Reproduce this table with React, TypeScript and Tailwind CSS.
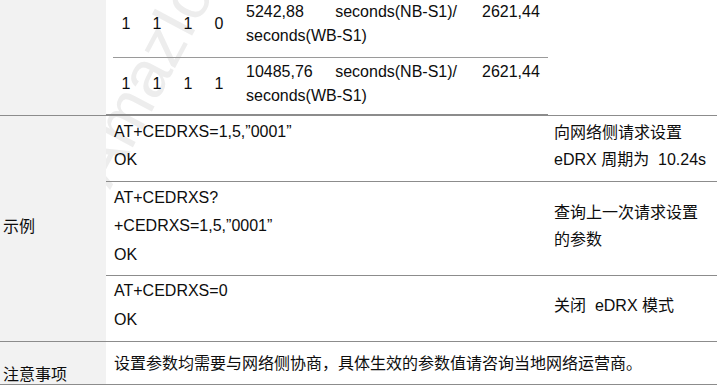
const lineColor = "border-[#8c8c8c]";

function NestedRow({ bits, value, rest, first }: { bits: string[]; value: string; rest: string; first?: boolean }) {
  return (
    <div className={first ? "flex items-start h-[58px] border-b border-[#9a9a9a]" : "flex items-start h-[56px] pt-[2px]"}>
      {bits.map((b, i) => (
        <div key={i} className="w-[31px] h-[48px] pl-[8.5px] flex items-center">
          {b}
        </div>
      ))}
      <div className="w-[236px] pl-[9px] pr-[16px] leading-[24px] text-justify">
        {value} seconds(NB-S1)/ {rest}
      </div>
      <div className="w-[75px] pl-[9px] leading-[24px]">2621,44</div>
    </div>
  );
}

function ExampleRow({ height, border, cmds, desc, top }: { height: string; border?: boolean; cmds: string[]; desc: string[]; top: string }) {
  return (
    <div className={`flex ${height} ${border ? `border-b ${lineColor}` : ""}`}>
      <div className={`w-[442px] pl-[8px] ${top} leading-[28.5px]`}>
        {cmds.map((c, i) => (
          <div key={i}>{c}</div>
        ))}
      </div>
      <div className="flex-1 pl-[6px] pb-[4px] flex flex-col justify-center leading-[26.5px] whitespace-pre">
        {desc.map((d, i) => (
          <div key={i}>{d}</div>
        ))}
      </div>
    </div>
  );
}

export default function App() {
  return (
    <div className="relative w-[718px] h-[391px] overflow-hidden bg-white text-[16px] text-[#0d0d0d] font-['Liberation_Sans','Noto_Sans_CJK_SC',sans-serif]">
      {/* watermark */}
      <div
        aria-hidden="true"
        className="absolute left-[110px] top-[134px] origin-[0_56px] -rotate-[62deg] text-[66px] leading-none text-[#ededed] whitespace-nowrap pointer-events-none select-none"
      >
        AmazIoT
      </div>

      <div className="relative w-[717px]">
        {/* tail of the eDRX value table */}
        <div className="flex h-[116px]">
          <div className={`w-[106px] bg-[#f2f2f2] border-b ${lineColor}`} />
          <div className={`w-[442px] pl-[7px] border-b-2 ${lineColor}`}>
            <NestedRow first bits={["1", "1", "1", "0"]} value="5242,88" rest="seconds(WB-S1)" />
            <NestedRow bits={["1", "1", "1", "1"]} value="10485,76" rest="seconds(WB-S1)" />
          </div>
          <div className={`flex-1 border-b ${lineColor}`} />
        </div>

        {/* 示例 */}
        <div className={`flex border-b ${lineColor}`}>
          <div className="w-[106px] bg-[#f2f2f2] pl-[3px] pb-[3px] flex items-center">示例</div>
          <div className="flex-1">
            <ExampleRow
              height="h-[66px]"
              border
              top="pt-[1.5px]"
              cmds={["AT+CEDRXS=1,5,\u201d0001\u201d", "OK"]}
              desc={["向网络侧请求设置", "eDRX 周期为  10.24s"]}
            />
            <ExampleRow
              height="h-[94px]"
              border
              top="pt-[1.5px]"
              cmds={["AT+CEDRXS?", "+CEDRXS=1,5,\u201d0001\u201d", "OK"]}
              desc={["查询上一次请求设置", "的参数"]}
            />
            <ExampleRow
              height="h-[65px]"
              top="pt-[1px]"
              cmds={["AT+CEDRXS=0", "OK"]}
              desc={["关闭  eDRX 模式"]}
            />
          </div>
        </div>

        {/* 注意事项 */}
        <div className={`flex h-[43px] border-b ${lineColor}`}>
          <div className="w-[106px] bg-[#f2f2f2] pl-[3px] flex items-end leading-[18px]">注意事项</div>
          <div className="flex-1 pl-[8px] pt-[12px] leading-[20px]">
            设置参数均需要与网络侧协商，具体生效的参数值请咨询当地网络运营商。
          </div>
        </div>
      </div>
    </div>
  );
}
